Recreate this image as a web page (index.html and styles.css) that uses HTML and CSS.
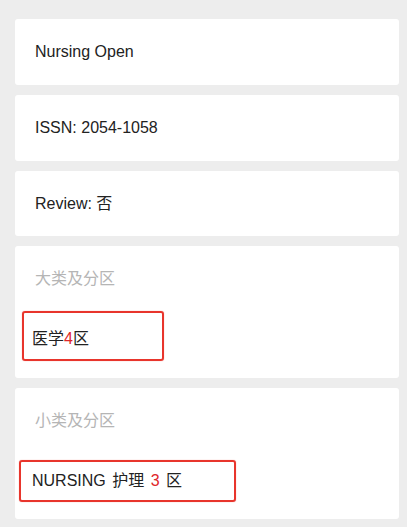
FILE: index.html
```html
<!DOCTYPE html>
<html lang="zh">
<head>
<meta charset="utf-8">
<link rel="stylesheet" href="styles.css">
</head>
<body>
<div class="list">
  <div class="card"><div class="line">Nursing Open</div></div>
  <div class="card"><div class="line">ISSN: 2054-1058</div></div>
  <div class="card card-short"><div class="line">Review: 否</div></div>
  <div class="card card-zone">
    <div class="line label">大类及分区</div>
    <div class="mark mark-major"><span class="line">医学<span class="num">4</span>区</span></div>
  </div>
  <div class="card card-zone card-minor">
    <div class="line label">小类及分区</div>
    <div class="mark mark-minor"><span class="line spaced">NURSING 护理 <span class="num">3</span> 区</span></div>
  </div>
</div>
</body>
</html>
```
FILE: styles.css
```css
html, body {
  margin: 0;
  padding: 0;
}
body {
  background: #ededed;
  font-family: "Liberation Sans", Arial, "Noto Sans CJK SC", sans-serif;
  font-size: 16px;
  color: #222;
}
.list {
  display: flex;
  flex-direction: column;
  gap: 10px;
  padding: 19px 8px 8px 15px;
}
.card {
  background: #fff;
  border-radius: 3px;
  padding: 21px 20px;
}
.card-short {
  padding-bottom: 20px;
}
.line {
  display: block;
  line-height: 24px;
  white-space: nowrap;
}
.spaced {
  word-spacing: 2px;
}
.label {
  color: #b5b5b5;
}
.card-zone {
  padding-bottom: 17px;
}
.card-minor {
  padding-bottom: 17px;
}
.mark {
  border: 2px solid #e8352c;
  border-radius: 3px;
  box-shadow: 0 0 1px rgba(232, 53, 44, 0.6);
  box-sizing: border-box;
}
.mark-major {
  margin: 20px 0 0 -13px;
  width: 142px;
  padding: 14px 8px 8px;
}
.mark-minor {
  margin: 27px 0 0 -16px;
  width: 217px;
  padding: 7px 11px;
}
.num {
  color: #e0262a;
}
```
